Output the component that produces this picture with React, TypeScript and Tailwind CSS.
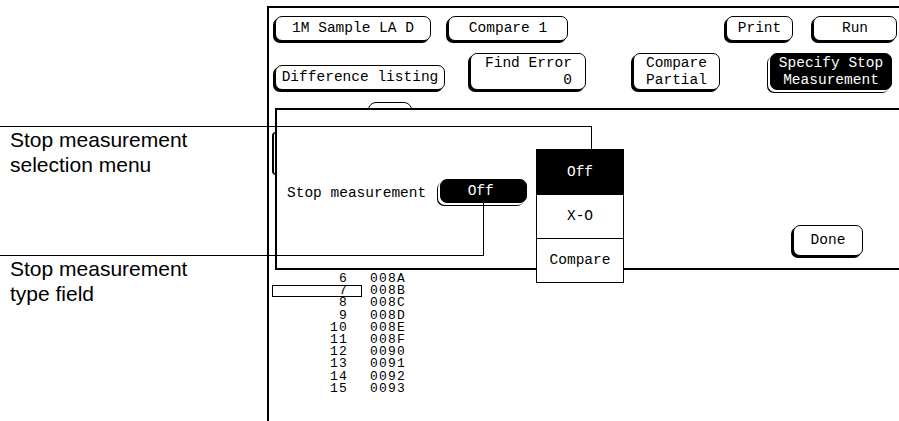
import clsx from 'clsx';
import type { ReactNode } from 'react';

const Btn = ({ className, dark, children }: { className?: string; dark?: boolean; children: ReactNode }) => (
    <div
        className={clsx(
            'flex shrink-0 flex-col justify-center rounded-[7px] border border-black',
            dark
                ? 'bg-black text-white shadow-[-2px_2px_0_0_#fff,-3px_3px_0_0_#000]'
                : 'bg-white text-black shadow-[-2px_2px_0_0_#000]',
            className,
        )}
    >
        {children}
    </div>
);

const rows = [
    ['6', '008A'],
    ['7', '008B'],
    ['8', '008C'],
    ['9', '008D'],
    ['10', '008E'],
    ['11', '008F'],
    ['12', '0090'],
    ['13', '0091'],
    ['14', '0092'],
    ['15', '0093'],
];

export default function App() {
    return (
        <div className="relative flex h-[421px] w-[899px] overflow-hidden bg-white text-black">
            {/* callout labels */}
            <div className="w-[267px] shrink-0 pt-[127px] pl-[10px] font-['Liberation_Sans',Arial,sans-serif] text-[21px] leading-[25px]">
                <p>
                    Stop measurement
                    <br />
                    selection menu
                </p>
                <p className="mt-[79px]">
                    Stop measurement
                    <br />
                    type field
                </p>
            </div>

            {/* analyzer screen */}
            <div className="mt-[6px] flex flex-1 flex-col border-t-2 border-l-2 border-black font-['Liberation_Mono',monospace] text-[14.5px] leading-none">
                <div className="mt-[8px] flex">
                    <Btn className="ml-[6px] h-[25px] w-[156px] items-center">1M Sample LA D</Btn>
                    <Btn className="ml-[17px] h-[25px] w-[120px] items-center">Compare 1</Btn>
                    <Btn className="ml-[158px] h-[25px] w-[67px] items-center">Print</Btn>
                    <Btn className="ml-[20px] h-[25px] w-[84px] items-center">Run</Btn>
                </div>

                <div className="mt-[12px] flex h-[37px] items-end">
                    <Btn className="ml-[6px] h-[25px] w-[170px] items-center">Difference listing</Btn>
                    <Btn className="ml-[25px] h-[37px] w-[116px] items-end gap-[3px] pr-[13px]">
                        <span>Find Error</span>
                        <span>0</span>
                    </Btn>
                    <Btn className="ml-[47px] h-[37px] w-[87px] items-center gap-[3px]">
                        <span>Compare</span>
                        <span>Partial</span>
                    </Btn>
                    <Btn dark className="ml-[50px] h-[37px] w-[122px] items-center gap-[3px]">
                        <span>Specify Stop</span>
                        <span>Measurement</span>
                    </Btn>
                </div>

                <div className="relative mt-[18px] ml-[6px]">
                    {/* buttons hidden behind the dialog */}
                    <div className="absolute top-[-6px] left-[93px] h-[14px] w-[44px] rounded-t-[8px] border border-black" />
                    <div className="absolute top-[24px] left-[-3px] h-[43px] w-[10px] rounded-l-[4px] border border-l-2 border-black" />

                    <div className="relative flex h-[162px] w-[640px] flex-col border-2 border-black bg-white">
                        <div className="mt-[69px] flex h-[24px] items-center pl-[10px]">
                            <span className="pt-[4px]">Stop measurement</span>
                            <Btn dark className="ml-[14px] h-[24px] w-[87px] items-center pr-[6px]">
                                Off
                            </Btn>
                        </div>
                        <Btn className="mt-[22px] ml-[516px] h-[31px] w-[70px] items-center">Done</Btn>

                        {/* selection menu */}
                        <div className="absolute top-[39px] left-[259px] flex w-[88px] flex-col border border-black bg-white">
                            <div className="flex h-[45px] items-center justify-center bg-black text-white">Off</div>
                            <div className="flex h-[44px] items-center justify-center border-b border-black">X-O</div>
                            <div className="flex h-[43px] items-center justify-center">Compare</div>
                        </div>
                    </div>
                </div>

                <div className="mt-[3px] ml-[3px] flex flex-col text-[13px] leading-[12.2px] tracking-[1.2px]">
                    {rows.map(([n, hex]) => (
                        <div key={n} className="flex">
                            <span
                                className={clsx(
                                    'w-[90px] pr-[14px] text-right',
                                    n === '7' && 'shadow-[inset_0_0_0_1px_#000]',
                                )}
                            >
                                {n}
                            </span>
                            <span className="ml-[8px]">{hex}</span>
                        </div>
                    ))}
                </div>
            </div>

            {/* callout lines */}
            <div className="absolute top-[126px] left-0 h-px w-[592px] bg-black" />
            <div className="absolute top-[126px] left-[591px] h-[23px] w-px bg-black" />
            <div className="absolute top-[255px] left-0 h-px w-[484px] bg-black" />
            <div className="absolute top-[203px] left-[483px] h-[53px] w-px bg-black" />
        </div>
    );
}
